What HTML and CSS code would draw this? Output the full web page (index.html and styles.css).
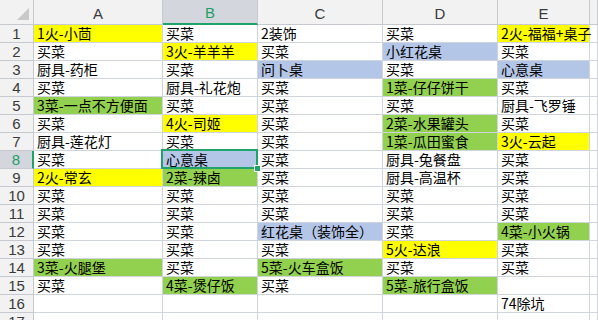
FILE: index.html
```html
<!DOCTYPE html>
<html lang="zh">
<head>
<meta charset="utf-8">
<link rel="stylesheet" href="styles.css">
</head>
<body>
<div class="sheet">
  <div class="corner"><span class="tri"></span></div>
  <div class="hd">A</div><div class="hd hsel">B</div><div class="hd">C</div><div class="hd">D</div><div class="hd">E</div><div class="hd"></div>

  <div class="rh">1</div><div class="c y">1火-小茴</div><div class="c">买菜</div><div class="c">2装饰</div><div class="c">买菜</div><div class="c y">2火-福福+桌子</div><div class="c"></div>
  <div class="rh">2</div><div class="c">买菜</div><div class="c y">3火-羊羊羊</div><div class="c">买菜</div><div class="c b">小红花桌</div><div class="c">买菜</div><div class="c"></div>
  <div class="rh">3</div><div class="c">厨具-药柜</div><div class="c">买菜</div><div class="c b">问卜桌</div><div class="c">买菜</div><div class="c b">心意桌</div><div class="c"></div>
  <div class="rh">4</div><div class="c">买菜</div><div class="c">厨具-礼花炮</div><div class="c">买菜</div><div class="c g">1菜-仔仔饼干</div><div class="c">买菜</div><div class="c"></div>
  <div class="rh">5</div><div class="c g">3菜-一点不方便面</div><div class="c">买菜</div><div class="c">买菜</div><div class="c">买菜</div><div class="c">厨具-飞罗锤</div><div class="c"></div>
  <div class="rh">6</div><div class="c">买菜</div><div class="c y">4火-司姬</div><div class="c">买菜</div><div class="c g">2菜-水果罐头</div><div class="c">买菜</div><div class="c"></div>
  <div class="rh">7</div><div class="c">厨具-莲花灯</div><div class="c">买菜</div><div class="c">买菜</div><div class="c g">1菜-瓜田蜜食</div><div class="c y">3火-云起</div><div class="c"></div>
  <div class="rh rsel">8</div><div class="c">买菜</div><div class="c b sel">心意桌</div><div class="c">买菜</div><div class="c">厨具-兔餐盘</div><div class="c">买菜</div><div class="c"></div>
  <div class="rh">9</div><div class="c y">2火-常玄</div><div class="c g">2菜-辣卤</div><div class="c">买菜</div><div class="c">厨具-高温杯</div><div class="c">买菜</div><div class="c"></div>
  <div class="rh">10</div><div class="c">买菜</div><div class="c">买菜</div><div class="c">买菜</div><div class="c">买菜</div><div class="c">买菜</div><div class="c"></div>
  <div class="rh">11</div><div class="c">买菜</div><div class="c">买菜</div><div class="c">买菜</div><div class="c">买菜</div><div class="c">买菜</div><div class="c"></div>
  <div class="rh">12</div><div class="c">买菜</div><div class="c">买菜</div><div class="c b">红花桌（装饰全）</div><div class="c">买菜</div><div class="c g">4菜-小火锅</div><div class="c"></div>
  <div class="rh">13</div><div class="c">买菜</div><div class="c">买菜</div><div class="c">买菜</div><div class="c y">5火-达浪</div><div class="c">买菜</div><div class="c"></div>
  <div class="rh">14</div><div class="c g">3菜-火腿堡</div><div class="c">买菜</div><div class="c g">5菜-火车盒饭</div><div class="c">买菜</div><div class="c">买菜</div><div class="c"></div>
  <div class="rh">15</div><div class="c">买菜</div><div class="c g">4菜-煲仔饭</div><div class="c">买菜</div><div class="c g">5菜-旅行盒饭</div><div class="c"></div><div class="c"></div>
  <div class="rh">16</div><div class="c"></div><div class="c"></div><div class="c"></div><div class="c"></div><div class="c">74除坑</div><div class="c"></div>
  <div class="rh">17</div><div class="c"></div><div class="c"></div><div class="c"></div><div class="c"></div><div class="c"></div><div class="c"></div>
</div>
</body>
</html>
```

FILE: styles.css
```css
html, body {
  margin: 0;
  padding: 0;
  background: #ffffff;
  overflow: hidden;
}

.sheet {
  display: grid;
  grid-template-columns: 34px 129px 95px 125px 115px 92px 1fr;
  grid-template-rows: 25px repeat(17, 18px);
  width: 598px;
  font-family: "Noto Sans CJK SC", "Noto Sans", sans-serif;
  font-size: 14px;
  color: #000;
}

.corner {
  background: #f2f2f2;
  border-right: 1px solid #c6c9cf;
  border-bottom: 1px solid #c6c9cf;
  box-sizing: border-box;
  position: relative;
}

.tri {
  position: absolute;
  right: 4px;
  bottom: 4px;
  width: 0;
  height: 0;
  border-left: 12px solid transparent;
  border-bottom: 12px solid #c9c9c9;
}

.hd {
  background: #f2f2f2;
  border-right: 1px solid #c6c9cf;
  border-bottom: 1px solid #c6c9cf;
  box-sizing: border-box;
  display: flex;
  align-items: center;
  justify-content: center;
  font-family: "Liberation Sans", "Noto Sans", sans-serif;
  font-size: 15px;
  color: #3a3a3a;
  padding-top: 2px;
}

.hsel {
  background: #d3d6dc;
  border-bottom: 2px solid #1fa36b;
  color: #1f9e6a;
}

.rh {
  background: #f2f2f2;
  border-right: 1px solid #c6c9cf;
  border-bottom: 1px solid #c6c9cf;
  box-sizing: border-box;
  display: flex;
  align-items: center;
  justify-content: center;
  font-family: "Liberation Sans", "Noto Sans", sans-serif;
  font-size: 15px;
  color: #3a3a3a;
}

.rsel {
  background: #d3d6dc;
  border-right: 2px solid #1fa36b;
  color: #1f9e6a;
}

.c {
  border-right: 1px solid #d0d4dc;
  border-bottom: 1px solid #d0d4dc;
  box-sizing: border-box;
  padding-left: 3px;
  line-height: 17px;
  white-space: nowrap;
  overflow: visible;
}

.y { background: #ffff00; }
.g { background: #92d050; }
.b { background: #b4c6e7; }

.sel {
  position: relative;
  z-index: 2;
}

.sel::after {
  content: "";
  position: absolute;
  top: -2px;
  left: -2px;
  right: -1px;
  bottom: -1px;
  border: 2px solid #1fa36b;
}

.sel::before {
  content: "";
  position: absolute;
  right: -4px;
  bottom: -4px;
  width: 5px;
  height: 5px;
  background: #1fa36b;
  border: 1px solid #ffffff;
  z-index: 3;
}
```
